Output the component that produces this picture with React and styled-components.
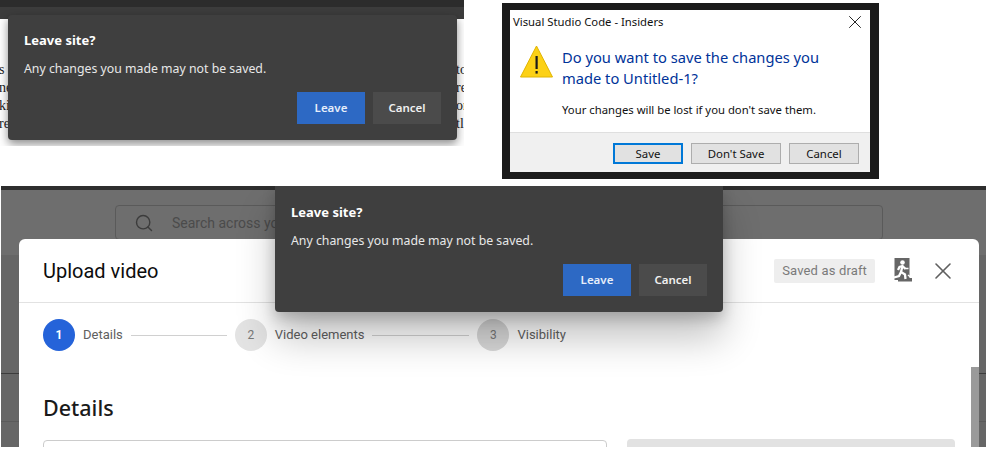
import React from 'react';
import styled, { createGlobalStyle } from 'styled-components';
import { Search, X } from 'lucide-react';

const GlobalStyle = createGlobalStyle`
html, body {
    margin: 0;
    background: #fff;
}
`;

const steps = [
    { n: 1, label: 'Details', active: true, width: 96 },
    { n: 2, label: 'Video elements', tone: '#e3e3e3', width: 97 },
    { n: 3, label: 'Visibility', tone: '#d8d8d8' }
];

const LeaveDialog = ({ className }) => (
    <DialogBox className={className}>
        <DialogTitle>Leave site?</DialogTitle>
        <DialogMessage>Any changes you made may not be saved.</DialogMessage>
        <DialogActions>
            <DialogButton $primary>Leave</DialogButton>
            <DialogButton>Cancel</DialogButton>
        </DialogActions>
    </DialogBox>
);

const ExitIcon = () => (
    <svg width="20" height="25" viewBox="0 0 20 25">
        <path d="M1.5 0h15v20h2.5v3.5H5V22H1.5z" fill="#666" />
        <circle cx="9.5" cy="4.5" r="2.3" fill="#fff" />
        <path d="M12.5 11 9.5 8 6.5 9 5 12M9.5 8 8 14l4 2.5.5 4.5M8 14l-2 4-5 1.5" fill="none" stroke="#fff" strokeWidth="2.3" />
        <path d="M12 10.5h3.5M15 17l3 2.5" fill="none" stroke="#fff" strokeWidth="1.5" />
    </svg>
);

const WarningIcon = () => (
    <svg width="33" height="33" viewBox="0 0 33 33">
        <path d="M16.5 1 32.5 32H.5z" fill="#fcd116" stroke="#e0b400" strokeWidth="1" />
        <rect x="15.5" y="11" width="2.2" height="13" fill="#1a1a1a" />
        <rect x="15.5" y="26" width="2.2" height="2.6" fill="#1a1a1a" />
    </svg>
);

export default function App() {
    return (
        <Page>
            <GlobalStyle />
            <TopRow>
                <BrowserShot>
                    <TabStrip />
                    <ToolStrip />
                    <Article>
                        <Scraps>
                            <span>s</span>
                            <span>ne</span>
                            <span>ki</span>
                            <span>re</span>
                        </Scraps>
                        <Scraps>
                            <span>to</span>
                            <span>re</span>
                            <span>or</span>
                            <span>tl</span>
                        </Scraps>
                    </Article>
                    <ArticleDialog />
                </BrowserShot>

                <WinFrame>
                    <WinWindow>
                        <WinTitleBar>
                            <span>Visual Studio Code - Insiders</span>
                            <WinClose size={22} strokeWidth={1} />
                        </WinTitleBar>
                        <WinBody>
                            <WarningIcon />
                            <WinText>
                                <WinHeading>Do you want to save the changes you made to Untitled-1?</WinHeading>
                                <WinNote>Your changes will be lost if you don't save them.</WinNote>
                            </WinText>
                        </WinBody>
                        <WinFooter>
                            <WinButton $focused $w={70}>Save</WinButton>
                            <WinButton $w={90}>Don't Save</WinButton>
                            <WinButton $w={70}>Cancel</WinButton>
                        </WinFooter>
                    </WinWindow>
                </WinFrame>
            </TopRow>

            <StudioShot>
                <StudioEdge />
                <SearchRow>
                    <SearchField>
                        <Search size={20} strokeWidth={1.7} color="#3c3c3c" />
                        <span>Search across your channel</span>
                    </SearchField>
                </SearchRow>
                <Modal>
                    <ModalHeader>
                        <ModalTitle>Upload video</ModalTitle>
                        <HeaderTools>
                            <DraftBadge>Saved as draft</DraftBadge>
                            <ExitIcon />
                            <ModalClose size={28} strokeWidth={1.4} />
                        </HeaderTools>
                    </ModalHeader>
                    <Stepper>
                        {steps.map((s) => (
                            <Step key={s.n}>
                                <StepDot $active={s.active} $tone={s.tone}>{s.n}</StepDot>
                                <StepLabel>{s.label}</StepLabel>
                                {s.width && <StepLine $w={s.width} />}
                            </Step>
                        ))}
                    </Stepper>
                    <ModalContent>
                        <DetailsTitle>Details</DetailsTitle>
                        <Fields>
                            <TitleInput />
                            <VideoPreview />
                        </Fields>
                    </ModalContent>
                    <ScrollThumb />
                </Modal>
                <StudioDialog />
            </StudioShot>
        </Page>
    );
}

const Page = styled.div`
width: 986px;
height: 473px;
overflow: hidden;
background: #fff;
font-family: Roboto, sans-serif;
`;

const TopRow = styled.div`
display: flex;
align-items: flex-start;
gap: 38px;
height: 186px;
`;

const BrowserShot = styled.div`
position: relative;
display: flex;
flex-direction: column;
width: 464px;
height: 146px;
overflow: hidden;
`;

const TabStrip = styled.div`
height: 7px;
background: #2c2c2c;
`;

const ToolStrip = styled.div`
height: 12px;
background: #3c3c3c;
`;

const Article = styled.div`
flex: 1;
display: flex;
justify-content: space-between;
padding-top: 42px;
background: #fff;
`;

const Scraps = styled.div`
display: flex;
flex-direction: column;
width: 8px;
font: 14px/18px "Liberation Serif", serif;
color: #222;
overflow: hidden;
&:first-child span {
    margin-left: -1px;
}
`;

const DialogBox = styled.div`
position: absolute;
box-sizing: border-box;
display: flex;
flex-direction: column;
width: 449px;
padding: 0 16px 16px;
background: #3f3f3f;
border-radius: 0 0 4px 4px;
font-family: "Noto Sans", sans-serif;
color: #fff;
`;

const DialogTitle = styled.div`
margin-top: 16px;
font-size: 13px;
font-weight: 700;
line-height: 18px;
`;

const DialogMessage = styled.div`
margin-top: 11px;
font-size: 12.3px;
line-height: 18px;
color: #e8e8e8;
`;

const DialogActions = styled.div`
display: flex;
justify-content: flex-end;
gap: 8px;
margin-top: 14px;
`;

const DialogButton = styled.div`
box-sizing: border-box;
display: flex;
align-items: center;
justify-content: center;
width: 68px;
height: 32px;
padding-bottom: 2px;
background: ${(p) => (p.$primary ? '#2d69c4' : '#4b4b4b')};
font-size: 11.5px;
font-weight: 600;
color: ${(p) => (p.$primary ? '#e6eefa' : '#f0f0f0')};
`;

const ArticleDialog = styled(LeaveDialog)`
left: 8px;
top: 15px;
height: 125px;
border-radius: 4px;
box-shadow: 0 4px 10px rgba(0, 0, 0, 0.45);
`;

const StudioDialog = styled(LeaveDialog)`
left: 274px;
top: 0;
width: 448px;
height: 126px;
padding-top: 1px;
box-shadow: 0 26px 38px rgba(0, 0, 0, 0.24), 0 6px 14px rgba(0, 0, 0, 0.2);
`;

const WinFrame = styled.div`
box-sizing: border-box;
width: 377px;
height: 176px;
margin-top: 3px;
padding: 7px 9px 7px 8px;
background: #1b1b1b;
`;

const WinWindow = styled.div`
display: flex;
flex-direction: column;
height: 100%;
background: #fff;
font-family: "Noto Sans", sans-serif;
`;

const WinTitleBar = styled.div`
display: flex;
align-items: center;
justify-content: space-between;
height: 23px;
padding: 0 8px 0 3px;
font-size: 11.3px;
color: #111;
`;

const WinClose = styled(X)`
margin: -4px;
color: #111;
`;

const WinBody = styled.div`
flex: 1;
display: flex;
gap: 9px;
padding: 12px 10px 0;
`;

const WinText = styled.div`
display: flex;
flex-direction: column;
padding-top: 2px;
`;

const WinHeading = styled.div`
width: 290px;
font-size: 14.7px;
line-height: 21px;
color: #003399;
`;

const WinNote = styled.div`
margin-top: 13px;
font-size: 11.3px;
line-height: 16px;
color: #111;
`;

const WinFooter = styled.div`
box-sizing: border-box;
display: flex;
justify-content: flex-end;
gap: 8px;
height: 40px;
padding: 10px 11px 0;
background: #f0f0f0;
border-top: 1px solid #dfdfdf;
`;

const WinButton = styled.div`
box-sizing: border-box;
display: flex;
align-items: center;
justify-content: center;
width: ${(p) => p.$w}px;
height: 21px;
background: #e1e1e1;
border: ${(p) => (p.$focused ? '2px solid #0078d7' : '1px solid #adadad')};
font-size: 11.4px;
color: #111;
`;

const StudioShot = styled.div`
position: relative;
box-sizing: border-box;
display: flex;
flex-direction: column;
width: 985px;
height: 261px;
margin-left: 1px;
overflow: hidden;
background:
    linear-gradient(#3c3c3c, #3c3c3c) 0 187px / 100% 1px no-repeat,
    linear-gradient(#5a5a5a, #5a5a5a) 0 235px / 100% 1px no-repeat,
    linear-gradient(#6e6e6e 69px, #666 69px);
`;

const StudioEdge = styled.div`
height: 4px;
flex: none;
background: #2e2e2e;
`;

const SearchRow = styled.div`
height: 49px;
flex: none;
box-sizing: border-box;
padding: 15px 103px 0 114px;
`;

const SearchField = styled.div`
box-sizing: border-box;
display: flex;
align-items: center;
gap: 18px;
height: 35px;
padding: 0 18px;
border: 1px solid #5a5a5a;
border-radius: 4px;
font-size: 14px;
color: #4b4b4b;
`;

const Modal = styled.div`
position: relative;
flex: 1;
min-height: 0;
overflow: hidden;
display: flex;
flex-direction: column;
margin: 0 7px 0 18px;
background: #fff;
border-radius: 6px 6px 0 0;
`;

const ModalHeader = styled.div`
display: flex;
align-items: center;
justify-content: space-between;
height: 64px;
flex: none;
box-sizing: border-box;
padding: 0 24px;
border-bottom: 1px solid #e2e2e2;
`;

const ModalTitle = styled.div`
font-size: 20px;
color: #0d0d0d;
`;

const HeaderTools = styled.div`
display: flex;
align-items: center;
gap: 18px;
`;

const ModalClose = styled(X)`
margin: -2px;
color: #606060;
`;

const DraftBadge = styled.div`
display: flex;
align-items: center;
height: 24px;
padding: 0 8px;
background: #eee;
border-radius: 2px;
font-size: 13px;
letter-spacing: 0.15px;
color: #7a7a7a;
`;

const Stepper = styled.div`
display: flex;
align-items: center;
height: 63px;
flex: none;
box-sizing: border-box;
padding: 0 24px;
`;

const Step = styled.div`
display: flex;
align-items: center;
`;

const StepDot = styled.div`
display: flex;
align-items: center;
justify-content: center;
width: 32px;
height: 32px;
border-radius: 50%;
background: ${(p) => (p.$active ? '#2563d9' : p.$tone)};
font-size: 12px;
font-weight: ${(p) => (p.$active ? 700 : 400)};
color: ${(p) => (p.$active ? '#fff' : '#777')};
`;

const StepLabel = styled.div`
margin-left: 8px;
font-size: 13px;
color: #606060;
`;

const StepLine = styled.div`
width: ${(p) => p.$w}px;
height: 1px;
margin: 1px 8px 0;
background: #d0d0d0;
`;

const ModalContent = styled.div`
display: flex;
flex-direction: column;
padding: 0 24px;
`;

const DetailsTitle = styled.div`
margin-top: 27px;
font-family: "Noto Sans", sans-serif;
font-size: 21.5px;
font-weight: 500;
line-height: 30px;
color: #1a1a1a;
`;

const Fields = styled.div`
display: flex;
align-items: flex-start;
gap: 20px;
margin-top: 16px;
`;

const TitleInput = styled.div`
box-sizing: border-box;
width: 564px;
height: 60px;
margin-top: 1px;
border: 1px solid #ccc;
border-radius: 4px;
`;

const VideoPreview = styled.div`
width: 328px;
height: 60px;
background: #e2e2e2;
border-radius: 4px;
`;

const ScrollThumb = styled.div`
position: absolute;
right: 0;
bottom: 0;
width: 8px;
height: 80px;
background: #9a9a9a;
`;
